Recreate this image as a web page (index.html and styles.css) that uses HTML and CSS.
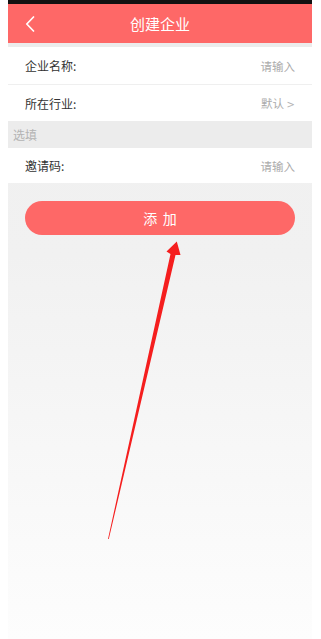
FILE: index.html
```html
<!DOCTYPE html>
<html lang="zh-CN">
<head>
<meta charset="utf-8">
<title>创建企业</title>
<link rel="stylesheet" href="styles.css">
</head>
<body>
<div class="app">
  <div class="statusbar"></div>
  <header class="header">
    <span class="back">
      <svg width="10" height="16" viewBox="0 0 10 16"><path d="M8.5 1 L1.8 8 L8.5 15" fill="none" stroke="#fff" stroke-width="1.7" stroke-linecap="round" stroke-linejoin="round"/></svg>
    </span>
    <h1 class="title">创建企业</h1>
  </header>
  <div class="spacer"></div>
  <div class="group">
    <div class="row row-first">
      <span class="label">企业名称:</span>
      <span class="value">请输入</span>
    </div>
    <div class="row row-second">
      <span class="label">所在行业:</span>
      <span class="value">默认 <span class="chev">&gt;</span></span>
    </div>
  </div>
  <div class="section">选填</div>
  <div class="group">
    <div class="row row-third">
      <span class="label">邀请码:</span>
      <span class="value">请输入</span>
    </div>
  </div>
  <div class="actions">
    <button class="btn">添 加</button>
  </div>
  <svg class="arrow" width="304" height="639" viewBox="8 0 304 639">
    <polygon points="108,539 170.5,254 166.5,251.5 176.8,241.5 180.5,255 175.5,255 108.8,539" fill="#f51e1e"/>
  </svg>
</div>
</body>
</html>
```

FILE: styles.css
```css
html, body {
  margin: 0;
  padding: 0;
  background: #ffffff;
}
body {
  padding: 0 9px 0 8px;
  font-family: "Noto Sans CJK SC", "Noto Sans", sans-serif;
}
.app {
  position: relative;
  height: 639px;
  display: flex;
  flex-direction: column;
  background: linear-gradient(#efefef 0%, #f1f1f1 40%, #fdfdfd 100%);
  overflow: hidden;
}
.statusbar {
  height: 4px;
  background: #111;
}
.header {
  position: relative;
  height: 39px;
  background: #fe6867;
  display: flex;
  align-items: center;
  justify-content: center;
}
.back {
  position: absolute;
  left: 17px;
  top: 12px;
  display: flex;
}
.title {
  margin: 0;
  font-size: 15px;
  font-weight: normal;
  color: #fff;
  line-height: 1;
}
.spacer {
  height: 4px;
  background: #ececec;
}
.group {
  background: #fff;
}
.row {
  display: flex;
  align-items: center;
  justify-content: space-between;
  padding: 0 17px;
  font-size: 12px;
}
.row-first {
  height: 37px;
  border-bottom: 1px solid #efefef;
}
.row-second {
  height: 36px;
}
.row-third {
  height: 35px;
}
.label {
  color: #333;
}
.value {
  color: #ababab;
  font-size: 11.5px;
}
.chev {
  font-family: "DejaVu Sans", sans-serif;
  font-size: 10px;
  color: #b5b5b5;
}
.section {
  height: 27px;
  display: flex;
  align-items: center;
  padding-left: 5px;
  background: #ececec;
  color: #b3b3b3;
  font-size: 12px;
}
.actions {
  padding: 18px 17px 0;
}
.btn {
  display: block;
  width: 100%;
  height: 34px;
  border: none;
  border-radius: 17px;
  background: #fe6867;
  color: #fff;
  font-family: "Noto Sans CJK SC", sans-serif;
  font-size: 14px;
  letter-spacing: 1.2px;
  padding: 0 0 0 1px;
}
.arrow {
  position: absolute;
  left: 0;
  top: 0;
  pointer-events: none;
}
```
